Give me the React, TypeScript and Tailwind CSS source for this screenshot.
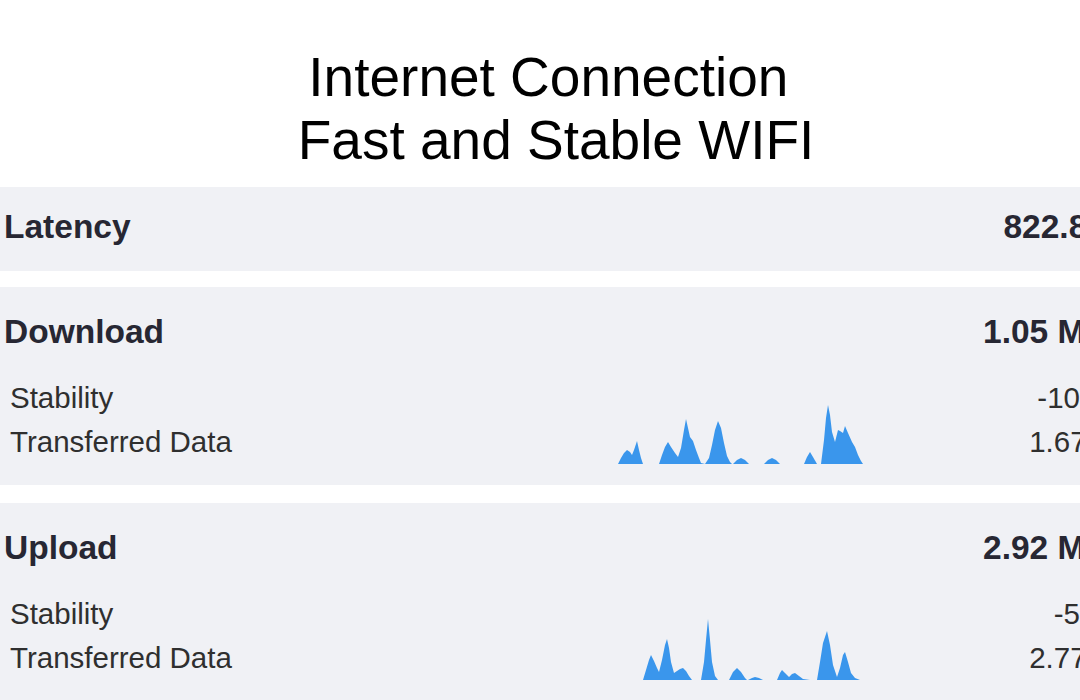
import React from 'react'

const font = { fontFamily: '"Liberation Sans", Arial, sans-serif' }

// chart outlines, drawn in page coordinates
const downloadPeaks = [
  'M618,464 L621,458 L624,453 L627,450 L630,452 L632,455 L634,450 L637,441 L639,450 L641,458 L643,464 Z',
  'M659,464 L662,455 L665,447 L668,442 L671,447 L675,453 L678,457 L681,448 L684,430 L686,419 L688,428 L690,437 L693,441 L696,450 L699,458 L701,463 L705,464 Z',
  'M705,464 L709,458 L712,445 L715,430 L718,421 L721,428 L724,443 L727,456 L730,462 L732,464 Z',
  'M733,464 L737,460 L741,458 L745,460 L749,464 Z',
  'M764,464 L768,460 L772,458 L776,460 L780,464 Z',
  'M804,464 L807,457 L810,452 L813,457 L817,464 Z',
  'M821,464 L824,440 L826,418 L828,405 L830,415 L832,432 L835,442 L838,430 L840,431 L843,433 L845,426 L848,433 L852,442 L855,447 L858,455 L861,461 L863,464 Z',
]

const uploadPeaks = [
  'M643,680 L646,670 L649,660 L651,655 L654,661 L657,668 L659,672 L662,660 L665,645 L667,639 L669,648 L671,662 L674,673 L677,671 L680,669 L683,668 L686,671 L689,676 L692,680 Z',
  'M701,680 L704,662 L706,640 L708,619 L710,640 L712,662 L715,676 L718,680 Z',
  'M729,680 L733,672 L737,668 L741,672 L745,678 L747,680 Z',
  'M748,680 L752,678 L755,677 L759,678 L763,680 Z',
  'M777,680 L780,673 L782,670 L785,673 L789,677 L792,674 L795,673 L799,676 L803,679 L810,680 Z',
  'M817,680 L820,662 L823,643 L827,631 L830,645 L833,665 L837,677 L840,668 L843,655 L845,652 L848,662 L851,673 L855,678 L860,680 Z',
]

function Chart({ top, peaks }: { top: number; peaks: string[] }) {
  return (
    <svg width="250" height="88" viewBox={`617 ${top} 250 88`} className="shrink-0">
      {peaks.map((d, i) => (
        <path key={i} d={d} fill="#3a96ec" />
      ))}
    </svg>
  )
}

function Block({ title, value, stability, data, chartTop, peaks }: {
  title: string
  value: string
  stability: string
  data: string
  chartTop: number
  peaks: string[]
}) {
  return (
    <div className="bg-[#f0f1f5] pt-[26px] pb-[21px]">
      <div className="flex justify-between px-[4px] text-[33.5px] leading-[38px] font-bold text-[#272733]">
        <span>{title}</span>
        <span>{value}</span>
      </div>
      <div className="flex mt-[25px] px-[10px] text-[29.5px] leading-[44px] text-[#2f2f2f]">
        <div className="w-[607px] shrink-0 flex flex-col">
          <span>Stability</span>
          <span>Transferred Data</span>
        </div>
        <Chart top={chartTop} peaks={peaks} />
        <div className="flex-1 flex flex-col items-end">
          <span>{stability}</span>
          <span>{data}</span>
        </div>
      </div>
    </div>
  )
}

export default function App() {
  return (
    <div className="w-[1080px] h-[700px] overflow-hidden bg-white" style={font}>
      <div className="w-[1149px] pt-[46px]">
        <h1 className="w-[1112px] text-center text-[55px] leading-[63px] text-black font-normal">
          Internet Connection&nbsp;
          <br />
          Fast and Stable WIFI
        </h1>

        <div className="mt-[15px] h-[84px] bg-[#f0f1f5] pt-[21px] flex justify-between px-[4px] text-[33.5px] leading-[38px] font-bold text-[#272733]">
          <span>Latency</span>
          <span>822.8 ms</span>
        </div>

        <div className="mt-[16px]">
          <Block title="Download" value="1.05 Mbps" stability="-10.3 %" data="1.67 MB" chartTop={376} peaks={downloadPeaks} />
        </div>

        <div className="mt-[18px]">
          <Block title="Upload" value="2.92 Mbps" stability="-5.2 %" data="2.77 MB" chartTop={592} peaks={uploadPeaks} />
        </div>
      </div>
    </div>
  )
}
